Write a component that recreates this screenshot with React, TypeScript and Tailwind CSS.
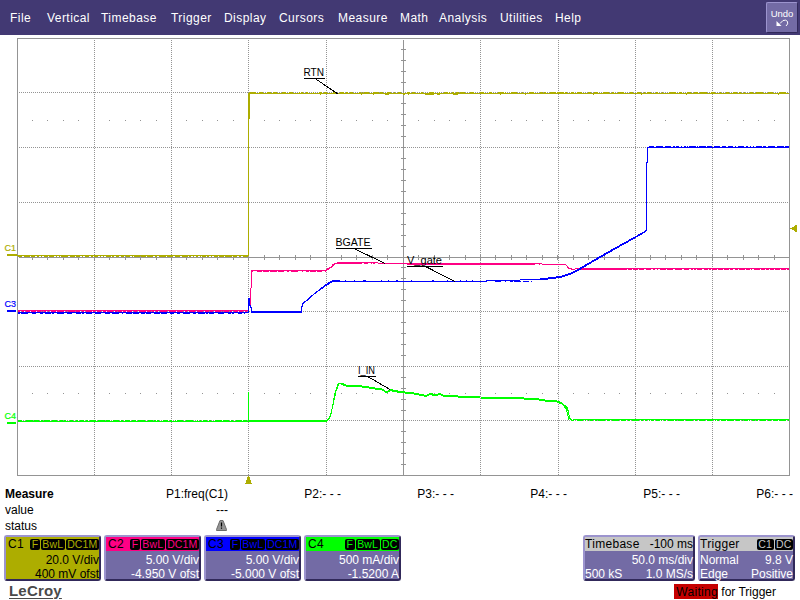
import { clsx } from "clsx";

const menuItems = [
  "File",
  "Vertical",
  "Timebase",
  "Trigger",
  "Display",
  "Cursors",
  "Measure",
  "Math",
  "Analysis",
  "Utilities",
  "Help",
];

const channels = [
  {
    name: "C1",
    tags: ["F", "BwL", "DC1M"],
    scale: "20.0 V/div",
    offset: "400 mV ofst",
    body: "bg-[#adad00] text-black",
    head: "bg-[#adad00]",
    tag: "text-[#adad00]",
  },
  {
    name: "C2",
    tags: ["F", "BwL", "DC1M"],
    scale: "5.00 V/div",
    offset: "-4.950 V ofst",
    body: "bg-[#736ba5] text-white",
    head: "bg-[#ff0084]",
    tag: "text-[#ff0084]",
  },
  {
    name: "C3",
    tags: ["F", "BwL", "DC1M"],
    scale: "5.00 V/div",
    offset: "-5.000 V ofst",
    body: "bg-[#736ba5] text-white",
    head: "bg-[#0000ff]",
    tag: "text-[#0000ff]",
  },
  {
    name: "C4",
    tags: ["F", "BwL", "DC"],
    scale: "500 mA/div",
    offset: "-1.5200 A",
    body: "bg-[#736ba5] text-white",
    head: "bg-[#00ff00]",
    tag: "text-[#00ff00]",
  },
];

const GRID = "#949494";
const columns = [94, 171, 248, 326, 403, 480, 558, 635, 712];
const rows = [92, 147, 202, 257, 311, 366, 420];

// Minor divisions, five to each major one
const minorX = Array.from({ length: 49 }, (_, i) => Math.floor(17 + (i + 1) * 15.45));
const minorY = Array.from({ length: 39 }, (_, i) => Math.floor(38.4 + (i + 1) * 10.93));

// Small repeatable flicker along the flat parts of a trace
const noise = (from: number, to: number, y: number, seed: number, gap = 4) => {
  let d = "";
  let s = seed;
  let x = from;
  while (x < to) {
    s = (s * 16807) % 2147483647;
    const run = 1 + ((s >> 8) % 7);
    d += `M${x} ${y}h${Math.min(run, to - x)}`;
    x += run + 1 + ((s >> 16) % gap);
  }
  return d;
};

const Label = ({ x, y, w, text, to }: { x: number; y: number; w: number; text: string; to: [number, number] }) => (
  <g>
    <text x={x} y={y} textLength={w} lengthAdjust="spacingAndGlyphs" fontSize="11" fill="#000">
      {text}
    </text>
    <path d={`M${x} ${y + 2.5}h${w + 1}`} stroke="#000" />
    <path d={`M${x + w / 2 + 2} ${y + 3}L${to[0]} ${to[1]}`} stroke="#000" />
  </g>
);

const Scope = () => (
  <svg viewBox="0 35 800 450" className="block h-[450px] w-[800px] shrink-0" fill="none" shapeRendering="crispEdges">
    {/* Graticule */}
    <g stroke={GRID}>
      {columns.map((x) => (
        <path key={x} d={`M${x + 0.5} 40V475`} strokeDasharray={x === 403 ? undefined : "1 1"} />
      ))}
      {rows.map((y) => (
        <path key={y} d={`M19 ${y + 0.5}H789`} strokeDasharray={y === 257 ? undefined : "1 1"} />
      ))}
      {minorX.map((x) => (
        <path key={x} d={`M${x + 0.5} 255v5M${x + 0.5} 120v1M${x + 0.5} 393v1`} />
      ))}
      {minorY.map((y) => (
        <path key={y} d={`M401 ${y + 0.5}h5`} />
      ))}
      <rect x="17.5" y="38.5" width="772" height="437" />
    </g>

    {/* C1 */}
    <g stroke="#adad00">
      <path d="M17 255.5H248.5V93.5H789M249.5 92V119" />
      <path d={noise(18, 248, 256.5, 7127, 2)} />
      <path d={noise(250, 789, 92.5, 31337, 6)} />
      <path d="M320 94.5h1M361 94.5h1M373 94.5h1M385 94.5h4M403 94.5h2M408 94.5h1M425 94.5h9M437 94.5h3M453 94.5h5M500 94.5h1M525 94.5h1M593 94.5h1M641 94.5h1M686 94.5h1M778 94.5h1" />
    </g>
    {/* C2 */}
    <g stroke="#ff0084">
      <path d="M18 310.5H248M250.5 307V288M251.5 288V270.5H326L328 268.5L331 267L333 264.5L338 262.5H356L400 263.5H530L566 265L569 268.5L574 269.5L576 268.5H789" />
      <path d="M326 271L329 268.5L332 267L335 264L338 263.5H356" />
      <path d={noise(18, 248, 311.5, 1299, 2)} />
      <path d={noise(252, 326, 271.5, 3571)} />
      <path d={noise(356, 402, 263.5, 9973)} />
      <path d="M407 264.5H530M580 269.5H620" />
      <path d={noise(530, 566, 264.5, 4177)} />
      <path d={noise(620, 789, 269.5, 18181, 2)} />
    </g>
    {/* C3 */}
    <g stroke="#0000ff">
      <path d="M18 312.5H248.5V298M249.5 298V306M250.5 305V308M251.5 307V312H301.5V308L303 303.5L312 295.5L326 285.5L333 281.5H463L510 280.5L540 279L560 276.5L570 273.5L578 269.5L600 256.5L646.5 230.5V162L647.5 162V147.5H789" />
      <path d="M252 311.5H301M304 303L314 294L326 284.5L333 280.5H340M540 280L560 277.5L570 274.5L578 270.5L600 257.5L646 231.5" />
      <path d={noise(18, 248, 313.5, 21011)} />
      <path d="M345 280.5h1M354 280.5h1M363 280.5h3M381 280.5h1M388 280.5h1M396 280.5h2M411 280.5h1M432 280.5h2M447 280.5h1M460 280.5h1M466 280.5h1M472 280.5h1" />
      <path d={noise(495, 532, 281.5, 4507)} />
      <path d={noise(649, 789, 146.5, 5003, 2)} />
    </g>
    {/* C4 */}
    <g stroke="#00ff00">
      <path d="M18 421.5H248.5V392V420.5H327L330 417L332 409L335 393L338 384.5L341 383L346 385L362 386L382 389L387 392L390 389.5L400 391.5L414 393L426 395.5L431 393L434 395L440 393.5L444 395.5L458 396L480 397L512 397.5L536 398.5L545 400L556 400.5L562 403L567 407.5L568.5 412L569.5 418L572 420.5L575 419.5H789" />
      <path d="M249 421.5H326L329 419L331 414L333 405L336 391L339 383.5L341 384L346 386L362 387L382 390L387 393L390 390.5L400 392.5L414 394L426 396.5L431 394L434 396L440 394.5L444 396.5L458 397L480 398L512 398.5L536 399.5L545 401L556 401.5L562 404L566 408.5L569 420" />
      <path d={noise(18, 248, 420.5, 6301)} />
      <path d={noise(577, 789, 420.5, 7703, 2)} />
    </g>

    {/* Zero level markers */}
    <path d="M7 255h9v1" stroke="#adad00" strokeWidth="2" />
    <path d="M7 311h9" stroke="#0000ff" strokeWidth="2" />
    <path d="M7 423h9" stroke="#00ff00" strokeWidth="2" />
    <g fontSize="9" stroke="currentColor" strokeWidth="0.2">
      <text x="4.5" y="251" textLength="11.5" lengthAdjust="spacingAndGlyphs" fill="currentColor" className="text-[#adad00]">
        C1
      </text>
      <text x="4.5" y="307" textLength="11.5" lengthAdjust="spacingAndGlyphs" fill="currentColor" className="text-[#0000ff]">
        C3
      </text>
      <text x="4.5" y="419" textLength="11.5" lengthAdjust="spacingAndGlyphs" fill="currentColor" className="text-[#00ff00]">
        C4
      </text>
    </g>

    {/* Trigger position and level */}
    <path d="M248 476h1l3 8h-7z" fill="#adad00" />
    <path d="M790 228.5l7 -4v8z" fill="#adad00" />

    <Label x={303.5} y={76} w={20.5} text="RTN" to={[338, 94]} />
    <Label x={335.5} y={246} w={35} text="BGATE" to={[385, 263.5]} />
    <Label x={407} y={264} w={35} text="V_gate" to={[455, 281.5]} />
    <Label x={358} y={374} w={17} text="I_IN" to={[390, 389.5]} />
  </svg>
);

const Tags = ({ items, color }: { items: string[]; color: string }) => (
  <div className="flex gap-px">
    {items.map((item) => (
      <span
        key={item}
        className={clsx(
          "h-[11px] rounded-[2px] bg-black px-[1.5px] text-[10.5px] leading-[11.5px] tracking-[0.15px]",
          color
        )}
      >
        {item}
      </span>
    ))}
  </div>
);

const panel =
  "flex h-[46px] flex-col border-2 border-t-[#9c94ce] border-l-[#9c94ce] border-r-[#31295a] border-b-[#31295a] rounded-[3px] text-[12px] leading-[14px]";

export default function App() {
  return (
    <div className="flex h-[600px] w-[800px] flex-col overflow-hidden bg-white font-['Liberation_Sans',Arial,sans-serif] text-black">
      {/* Menu bar */}
      <header className="flex h-[35px] shrink-0 items-center justify-between bg-[#423973] pl-[10px] pr-[2px] text-white">
        <nav className="grid grid-cols-[37px_54px_70px_53px_55px_59px_62px_39px_61px_55px_40px] pt-[2px] text-[12px] leading-[33px] tracking-[0.45px]">
          {menuItems.map((item) => (
            <span key={item}>{item}</span>
          ))}
        </nav>
        <button className="flex h-[31px] w-8 flex-col items-center rounded-[2px] border border-t-[#9c94ce] border-l-[#9c94ce] border-r-[#31295a] border-b-[#31295a] bg-[#736ba5] pt-[5px] text-[9.5px] leading-[11px]">
          Undo
          <svg viewBox="0 0 13 8" className="h-2 w-[13px]" fill="none" stroke="white">
            <path d="M4 4.5L7 1.5Q10 .3 11.5 2.5Q12.5 5 10 7" />
            <path d="M.5 2v5h5z" fill="white" stroke="none" />
          </svg>
        </button>
      </header>

      <Scope />

      {/* Measurements */}
      <section className="grid h-12 shrink-0 grid-cols-[110px_repeat(6,113px)] grid-rows-3 pl-[5px] text-[12px] leading-[18px]">
        <span className="font-bold">Measure</span>
        <span className="text-right">P1:freq(C1)</span>
        {["P2", "P3", "P4", "P5", "P6"].map((p) => (
          <span key={p} className="text-right">
            {p}:- - -
          </span>
        ))}
        <span className="col-start-1">value</span>
        <span className="text-right">---</span>
        <span className="col-start-1">status</span>
        <span className="flex items-center justify-end pr-px">
          <svg viewBox="0 0 11 11" className="h-[11px] w-[11px]">
            <path d="M4 .5h3l3.5 9v1H.5v-1z" fill="#949494" stroke="#6b6b6b" />
            <path d="M5.5 2.5v4M5.5 7.5v1.3" stroke="#000" strokeWidth="1.2" />
          </svg>
        </span>
      </section>

      {/* Channel, timebase and trigger descriptors */}
      <section className="mt-[2px] flex h-[46px] shrink-0 justify-between pl-1 pr-[5px]">
        <div className="flex gap-[3px]">
          {channels.map((c) => (
            <div key={c.name} className={clsx(panel, "w-[97px]", c.body)}>
              <div className={clsx("flex h-[14px] items-center justify-between pl-[2px] text-black", c.head)}>
                <span className="tracking-[0.3px]">{c.name}</span>
                <Tags items={c.tags} color={c.tag} />
              </div>
              <span className="pt-[2px] text-right">{c.scale}</span>
              <span className="text-right">{c.offset}</span>
            </div>
          ))}
        </div>
        <div className="flex gap-[3px]">
          <div className={clsx(panel, "w-[112px] bg-[#736ba5] text-white")}>
            <div className="flex h-[14px] justify-between bg-[#c6c6c6] text-black">
              <span className="tracking-[0.3px]">Timebase</span>
              <span>-100 ms</span>
            </div>
            <span className="pt-[2px] text-right">50.0 ms/div</span>
            <div className="flex justify-between">
              <span>500 kS</span>
              <span>1.0 MS/s</span>
            </div>
          </div>
          <div className={clsx(panel, "w-[97px] bg-[#736ba5] text-white")}>
            <div className="flex h-[14px] items-center justify-between bg-[#c6c6c6] text-black">
              <span className="tracking-[0.3px]">Trigger</span>
              <Tags items={["C1", "DC"]} color="text-[#c6c6c6]" />
            </div>
            <div className="flex justify-between pt-[2px]">
              <span>Normal</span>
              <span>9.8 V</span>
            </div>
            <div className="flex justify-between">
              <span>Edge</span>
              <span>Positive</span>
            </div>
          </div>
        </div>
      </section>

      {/* Status line */}
      <footer className="flex h-[19px] shrink-0 justify-between pl-[9px] pr-6 pt-[2px]">
        <span className="text-[15px] font-bold leading-4 tracking-[0.2px] text-[#4a4a4a] underline underline-offset-2">
          LeCroy
        </span>
        <span className="mt-px flex text-[12px] leading-4">
          <span className="h-[15px] bg-[#c60000] pl-[2px] tracking-[0.3px]">Waiting</span>
          <span className="whitespace-pre"> for Trigger</span>
        </span>
      </footer>
    </div>
  );
}
